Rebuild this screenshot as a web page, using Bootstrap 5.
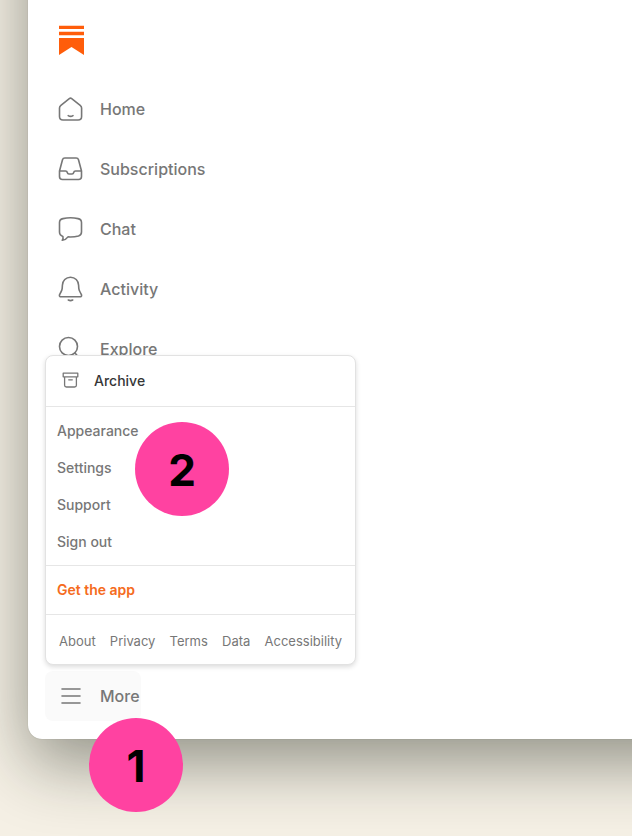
<!DOCTYPE html>
<html lang="en">
<head>
<meta charset="utf-8">
<meta name="viewport" content="width=device-width, initial-scale=1">
<title>Home</title>
<link href="https://cdn.jsdelivr.net/npm/bootstrap@5.3.0/dist/css/bootstrap.min.css" rel="stylesheet">
<style>
body { font-family: Inter, "Liberation Sans", sans-serif; background: #f5f0e5; color: #777; }
/* The window runs on past the top and right edges of the page. */
.app-window { margin: -120px -120px 97px 28px; padding: 120px 120px 18px 17px; background: #fff; border-radius: 0 0 14px 14px; box-shadow: 0 0 1px rgba(60,64,50,.4), 0 24px 66px rgba(28,34,24,.46); }
.brand { padding: 25px 14px 0; height: 79px; }
.side-link { display: flex; align-items: center; gap: 16px; height: 60px; padding: 0 14px 0 13px; font-size: 16px; line-height: 24px; font-weight: 500; color: #777; text-decoration: none; }
.more-btn { height: 50px; padding-right: 1px; background: #fafafa; border: 0; border-radius: 8px; }
.stroke-icon { fill: none; stroke: #777; stroke-width: 1.6; stroke-linecap: round; stroke-linejoin: round; flex: none; }
.more-menu { bottom: 56px; left: 0; width: 311px; border: 1px solid #e2e2e2; border-radius: 8px; background: #fff; box-shadow: 0 2px 5px rgba(0,0,0,.14); font-size: 14px; line-height: 21px; font-weight: 500; z-index: 2; }
.more-menu a { color: #777; text-decoration: none; }
.more-menu section + section { border-top: 1px solid #e6e6e6; }
.more-menu .archive-link { height: 50px; padding: 0 16px 2px; gap: 15px; color: #363737; }
.menu-group { padding: 5px 11px; }
.menu-group a { display: block; padding: 8px 0; }
.more-menu .app-link { display: block; padding: 13px 11px 14px; color: #f56b20; font-weight: 600; }
.legal-links { padding: 16px 13px 12px; font-size: 13px; font-weight: 400; }
.marker { width: 94px; height: 94px; background: #ff42a1; color: #000; font-size: 44px; line-height: 48px; font-weight: 700; z-index: 3; padding-top: 2px; }
.marker-one { left: 44px; top: 47px; }
.marker-two { left: 89px; top: 66px; }
</style>
<script src="https://cdn.jsdelivr.net/npm/bootstrap@5.3.0/dist/js/bootstrap.bundle.min.js"></script>
</head>
<body class="min-vh-100 d-flex flex-column overflow-hidden">
<main class="app-window flex-grow-1 d-flex flex-column">
  <a class="brand d-block" href="#" aria-label="Substack">
    <svg class="d-block" width="25" height="30" viewBox="0 0 25 30" fill="#ff5d0a" aria-hidden="true"><path d="M0 .8h25v3.3H0zM0 6.8h25v3.5H0zM0 13h25v17L12.500 22 0 30z"/></svg>
  </a>
  <nav class="d-flex flex-column align-items-start flex-grow-1" aria-label="Main">
    <a class="side-link" href="#"><svg class="stroke-icon" width="26" height="26" viewBox="0 0 26 26"><path d="M11.300 2.600Q12.500 1.700 13.700 2.600L22.200 9.300Q23.600 10.400 23.600 12V20.500Q23.600 24 20.100 24H5Q1.500 24 1.500 20.500V12Q1.500 10.400 2.900 9.300ZM10.200 19.600Q12.600 21.200 15 19.600"/></svg>Home</a>
    <a class="side-link" href="#"><svg class="stroke-icon" width="26" height="26" viewBox="0 0 26 26"><path d="M6.800 2H18.200Q20 2 20.500 3.700L23.500 15V20.500Q23.500 23.500 20.500 23.500H4.500Q1.500 23.500 1.500 20.500V15L4.500 3.700Q5 2 6.800 2ZM1.600 15H7.500Q9 15 9.300 16.500 9.600 18 11 18H14Q15.400 18 15.700 16.500 16 15 17.500 15H23.400"/></svg>Subscriptions</a>
    <a class="side-link" href="#"><svg class="stroke-icon" width="26" height="26" viewBox="0 0 26 26"><path d="M5 2.600Q12.500 1 20 2.600Q23.500 3.300 23.500 6.500V16Q23.500 19 20.500 20Q16 21.200 10 20.900Q8 23.800 4.300 24.300Q5.500 22.500 4.900 20.400Q1.500 19.300 1.500 16V6.500Q1.500 3.300 5 2.600Z"/></svg>Chat</a>
    <a class="side-link" href="#"><svg class="stroke-icon" width="26" height="26" viewBox="0 0 26 26"><path d="M12.500 1.200C7.800 1.200 4.600 4.700 4.400 9.200L4.200 12.300Q4 14 3.200 15.500L1.600 18.600Q.9 20.700 3.200 20.700H21.800Q24.100 20.700 23.400 18.600L21.800 15.500Q21 14 20.800 12.300L20.600 9.200C20.400 4.700 17.200 1.200 12.500 1.200ZM10.300 24Q12.500 25.200 14.700 24"/></svg>Activity</a>
    <a class="side-link" href="#"><svg class="stroke-icon" width="26" height="26" viewBox="0 0 26 26"><circle cx="10.500" cy="10.500" r="9"/><path d="M17 17l6 7"/></svg>Explore</a>
  </nav>
  <div class="position-relative">
    <button class="side-link more-btn" type="button" aria-expanded="true" aria-controls="more-menu"><svg class="stroke-icon" width="26" height="26" viewBox="0 0 26 26"><path d="M4 6h18M4 13h18M4 20h18"/></svg>More</button>
    <div class="more-menu position-absolute" id="more-menu">
      <section><a class="archive-link d-flex align-items-center" href="#"><svg class="stroke-icon" width="17" height="16" viewBox="0 0 17 16"><path stroke-width="1.300" d="M1.200 1.200H15.800V4.800H1.200ZM2.600 4.800V13.200Q2.600 15 4.400 15H12.600Q14.400 15 14.400 13.200V4.800M6.700 7.800H10.300"/></svg>Archive</a></section>
      <section class="menu-group">
        <a href="#">Appearance</a>
        <a href="#">Settings</a>
        <a href="#">Support</a>
        <a href="#">Sign out</a>
      </section>
      <section><a class="app-link" href="#">Get the app</a></section>
      <section class="legal-links d-flex justify-content-between">
        <a href="#">About</a><a href="#">Privacy</a><a href="#">Terms</a><a href="#">Data</a><a href="#">Accessibility</a>
      </section>
      <div class="marker marker-two position-absolute rounded-circle d-flex align-items-center justify-content-center">2</div>
    </div>
    <div class="marker marker-one position-absolute rounded-circle d-flex align-items-center justify-content-center">1</div>
  </div>
</main>
</body>
</html>
